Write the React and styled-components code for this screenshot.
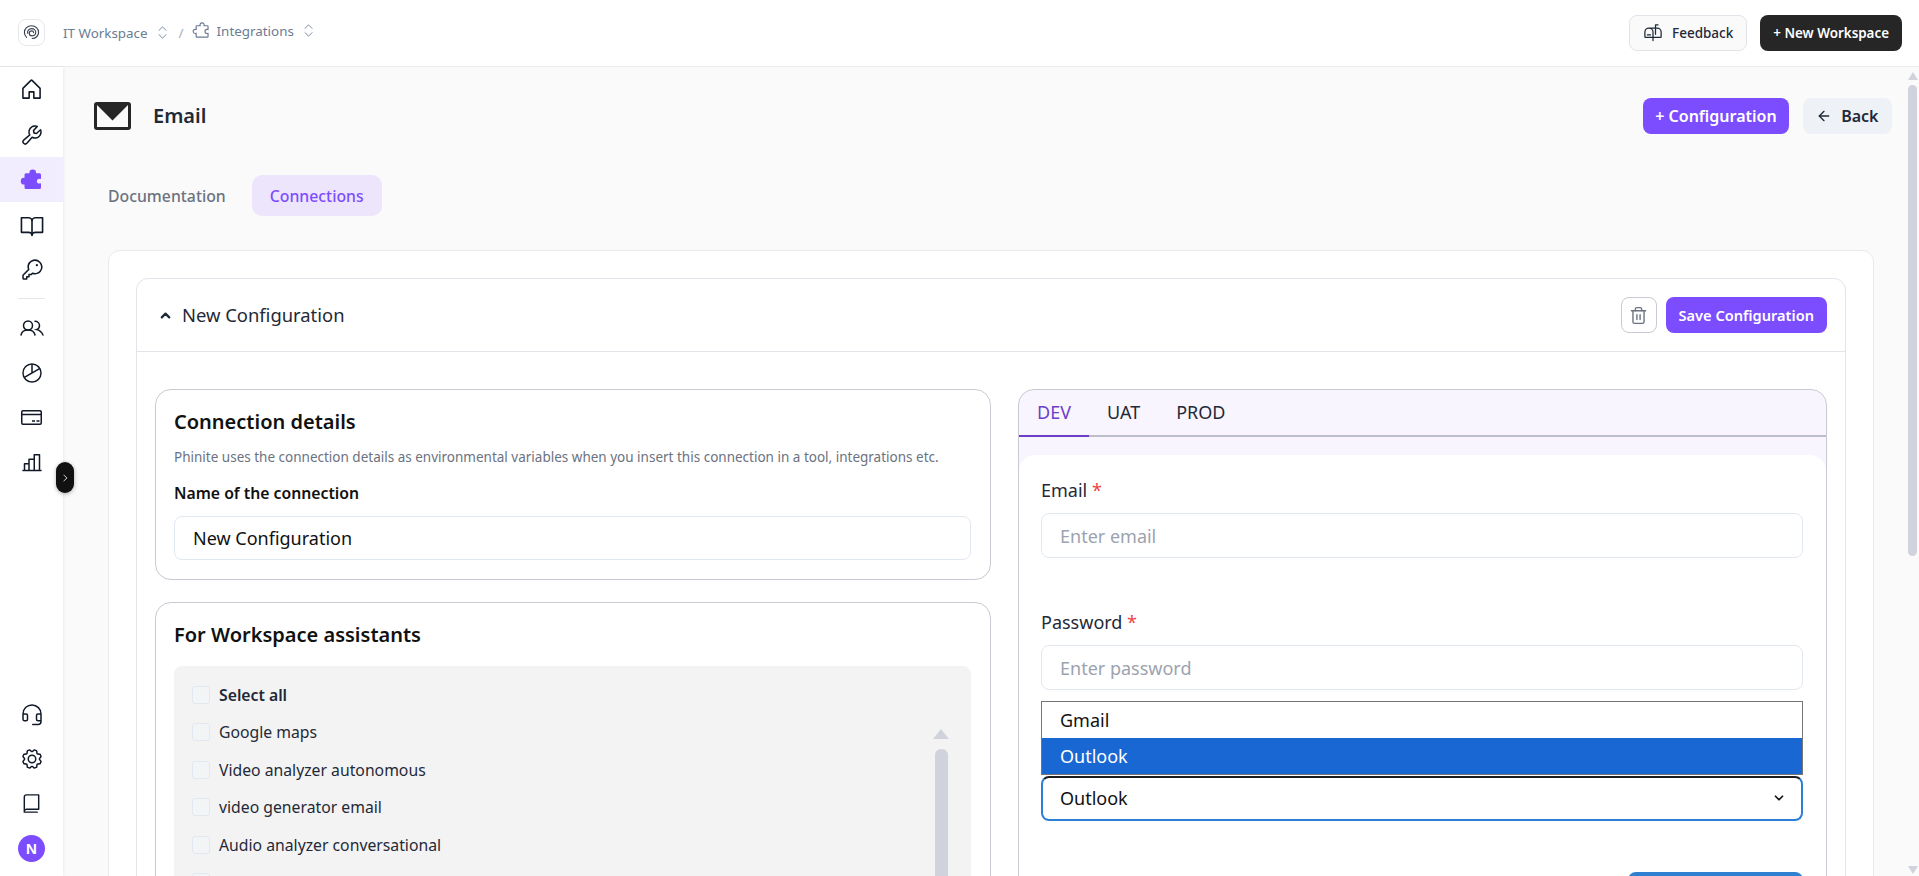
import styled, { createGlobalStyle } from 'styled-components';
import { ArrowLeft, ChevronDown, ChevronUp, ChevronsUpDown, Trash2 } from 'lucide-react';
import {
  PiBook,
  PiBookOpen,
  PiCaretRight,
  PiChartBar,
  PiChartPie,
  PiGear,
  PiHeadset,
  PiHouse,
  PiKey,
  PiMailbox,
  PiPuzzlePiece,
  PiPuzzlePieceFill,
  PiWrench,
} from 'react-icons/pi';

const GlobalStyle = createGlobalStyle`
  * {
    box-sizing: border-box;
  }

  html,
  body {
    margin: 0;
    height: 100%;
    overflow: hidden;
    font-family: 'Noto Sans', sans-serif;
    color: #1f2937;
  }
`;

const Page = styled.div`
  display: flex;
  flex-direction: column;
  height: 100vh;
`;

const TopBar = styled.header`
  display: flex;
  align-items: center;
  justify-content: space-between;
  flex: 0 0 67px;
  padding: 0 17px 1px 18px;
  background: #fff;
  border-bottom: 1px solid #e9eaee;
`;

const Breadcrumbs = styled.nav`
  display: flex;
  align-items: center;
  color: #6b7c93;
  font-size: 13.4px;
`;

const LogoBox = styled.div`
  display: flex;
  align-items: center;
  justify-content: center;
  width: 27px;
  height: 27px;
  margin-right: 18px;
  border: 1px solid #e5e7eb;
  border-radius: 8px;
`;

const Crumb = styled.span`
  display: flex;
  align-items: center;
  gap: 6px;
  position: relative;
  top: ${({ $top }) => $top || 0}px;
`;

const Slash = styled.span`
  margin: 0 8px 0 8px;
  color: #a3adbb;
`;

const TopActions = styled.div`
  display: flex;
  align-items: center;
  gap: 13px;
`;

const FeedbackButton = styled.button`
  display: flex;
  align-items: center;
  gap: 9px;
  height: 36px;
  padding: 0 13px;
  border: 1px solid #e2e4ea;
  border-radius: 8px;
  background: #fafafa;
  color: #1f2937;
  font: 500 13.5px 'Noto Sans', sans-serif;
`;

const DarkButton = styled.button`
  height: 36px;
  padding: 0 13px;
  border: 0;
  border-radius: 8px;
  background: #262626;
  color: #fff;
  font: 600 13.4px 'Noto Sans', sans-serif;
`;

const Body = styled.div`
  position: relative;
  display: flex;
  flex: 1;
  min-height: 0;
`;

const Sidebar = styled.aside`
  display: flex;
  flex-direction: column;
  flex: 0 0 63px;
  padding-bottom: 5px;
  background: #fff;
  box-shadow: 1px 0 3px rgba(0, 0, 0, 0.06);
  z-index: 1;
`;

const SideItem = styled.div`
  display: flex;
  align-items: center;
  justify-content: center;
  height: 45px;
  background: ${({ $active }) => ($active ? '#f1ecfe' : 'transparent')};
  color: ${({ $active }) => ($active ? '#7c4dff' : '#111827')};
`;

const SideDivider = styled.hr`
  width: 27px;
  margin: 6px auto 6px;
  border: 0;
  border-top: 1px solid #e5e7eb;
`;

const SideBottom = styled.div`
  margin-top: auto;
`;

const Avatar = styled.div`
  display: flex;
  align-items: center;
  justify-content: center;
  width: 27px;
  height: 27px;
  border-radius: 50%;
  background: #7c4dff;
  color: #fff;
  font: 700 15px 'Liberation Sans', sans-serif;
`;

const ExpandButton = styled.button`
  position: absolute;
  left: 56px;
  top: 395px;
  display: flex;
  align-items: center;
  justify-content: center;
  width: 18px;
  height: 31px;
  padding: 0;
  border: 0;
  border-radius: 9px;
  background: #111;
  color: #fff;
  box-shadow: 0 1px 4px rgba(0, 0, 0, 0.3);
  z-index: 2;
`;

const Main = styled.main`
  position: relative;
  flex: 1;
  min-width: 0;
  overflow: hidden;
  background: #fafafa;
`;

const MainInner = styled.div`
  padding: 31px 27px 0 31px;
`;

const PageScrollbar = styled.div`
  position: absolute;
  top: 0;
  bottom: 0;
  right: 2px;
  display: flex;
  flex-direction: column;
  align-items: center;
  width: 9px;
  padding: 5px 0 2px;
`;

const ArrowUp = styled.span`
  flex: none;
  width: 0;
  height: 0;
  border-left: ${({ $size }) => $size || 5}px solid transparent;
  border-right: ${({ $size }) => $size || 5}px solid transparent;
  border-bottom: ${({ $tall }) => $tall || 8}px solid #d0d3db;
`;

const ArrowDown = styled.span`
  flex: none;
  width: 0;
  height: 0;
  margin-top: auto;
  border-left: 5px solid transparent;
  border-right: 5px solid transparent;
  border-top: 8px solid #d0d3db;
`;

const PageThumb = styled.span`
  flex: none;
  width: 9px;
  height: 471px;
  margin-top: 5px;
  background: #d0d3db;
  border-radius: 5px;
`;

const TitleRow = styled.div`
  display: flex;
  align-items: center;
  height: 36px;
`;

const Title = styled.h1`
  flex: 1;
  margin: 0 0 2px 22px;
  color: #1f2937;
  font-size: 20px;
  font-weight: 600;
`;

const PrimaryButton = styled.button`
  height: 36px;
  padding: 0 ${({ $pad }) => $pad || 13}px;
  border: 0;
  border-radius: 8px;
  background: #7c4dff;
  color: #fff;
  font: 600 ${({ $size }) => $size || 16}px 'Noto Sans', sans-serif;
`;

const BackButton = styled.button`
  display: flex;
  align-items: center;
  gap: 9px;
  height: 36px;
  margin-left: 14px;
  padding: 0 13.5px;
  border: 0;
  border-radius: 8px;
  background: #eef2f6;
  color: #1f2937;
  font: 600 16px 'Noto Sans', sans-serif;
`;

const PageTabs = styled.div`
  display: flex;
  gap: 26px;
  margin: 41px 0 0 14px;
`;

const PageTab = styled.div`
  display: flex;
  align-items: center;
  height: 41px;
  padding: 0 ${({ $active }) => ($active ? 18 : 0)}px;
  border-radius: 10px;
  background: ${({ $active }) => ($active ? '#ede5fb' : 'transparent')};
  color: ${({ $active }) => ($active ? '#7c4dff' : '#6b7280')};
  font-size: 15.8px;
  font-weight: 500;
`;

const Panel = styled.section`
  margin: 34px 18px 0 14px;
  padding: 27px;
  background: #fff;
  border: 1px solid #e9eaee;
  border-radius: 12px;
`;

const Accordion = styled.div`
  border: 1px solid #e2e4ea;
  border-radius: 12px;
  overflow: hidden;
`;

const AccordionHead = styled.div`
  display: flex;
  align-items: center;
  height: 73px;
  padding: 0 18px 0 21px;
  border-bottom: 1px solid #e2e4ea;
`;

const AccordionTitle = styled.span`
  flex: 1;
  margin: 0 0 2px 9px;
  color: #1f2937;
  font-size: 18.4px;
`;

const TrashButton = styled.button`
  display: flex;
  align-items: center;
  justify-content: center;
  width: 36px;
  height: 36px;
  margin-right: 9px;
  padding: 0;
  border: 1px solid #c8cad2;
  border-radius: 8px;
  background: #fff;
  color: #6b7280;
`;

const Columns = styled.div`
  display: grid;
  grid-template-columns: 836px 809px;
  gap: 27px;
  padding: 37px 18px 32px;
`;

const LeftColumn = styled.div`
  display: flex;
  flex-direction: column;
  gap: 22px;
`;

const Card = styled.div`
  padding: 18px 19px 19px 18px;
  background: #fff;
  border: 1px solid #c8cad2;
  border-radius: 16px;
`;

const CardTitle = styled.h2`
  margin: 0;
  color: #111;
  font-size: 20px;
  line-height: 28px;
  font-weight: 600;
`;

const CardHint = styled.p`
  margin: 12px 0 0;
  color: #6b7280;
  font-size: 13.5px;
  line-height: 18px;
`;

const NameLabel = styled.div`
  margin-top: 16px;
  color: #111;
  font-size: 15.75px;
  line-height: 22px;
  font-weight: 600;
`;

const TextInput = styled.input`
  display: block;
  width: 100%;
  height: ${({ $height }) => $height || 45}px;
  margin-top: ${({ $top }) => $top || 0}px;
  padding: 0 18px;
  background: #fff;
  border: 1px solid #e2e8f0;
  border-radius: 8px;
  color: #111;
  font: 18px 'Noto Sans', sans-serif;
  outline: none;

  &::placeholder {
    color: #9ca3af;
    opacity: 1;
  }
`;

const AssistantBox = styled.div`
  margin-top: 17px;
  padding: 10px 0 10px 18px;
  background: #f3f3f3;
  border-radius: 8px;
`;

const CheckRow = styled.label`
  display: flex;
  align-items: center;
  gap: 9px;
  height: 37.5px;
  color: #1f2937;
  font-size: 15.75px;
  font-weight: ${({ $bold }) => ($bold ? 600 : 400)};
`;

const CheckBox = styled.span`
  flex: 0 0 18px;
  height: 18px;
  background: #f3f4f6;
  border: 1px solid #e2e8f0;
  border-radius: 3px;
`;

const AssistantScroll = styled.div`
  position: relative;
  margin-right: 23px;
`;

const ListScrollbar = styled.div`
  position: absolute;
  top: 15px;
  right: 0;
  display: flex;
  flex-direction: column;
  align-items: center;
  width: 14px;
`;

const ListThumb = styled.span`
  flex: none;
  width: 13px;
  height: 240px;
  margin-top: 10px;
  background: #d0d3db;
  border-radius: 6px;
`;

const EnvCard = styled.div`
  align-self: start;
  background: #f9f5fe;
  border: 1px solid #c8cad2;
  border-radius: 16px;
  overflow: hidden;
`;

const EnvTabs = styled.div`
  display: flex;
  height: 47px;
  border-bottom: 2px solid #bdbec9;
`;

const EnvTab = styled.div`
  display: flex;
  align-items: center;
  height: 47px;
  padding: 0 18px 2px;
  border-bottom: 2px solid ${({ $active }) => ($active ? '#6d3fc8' : 'transparent')};
  color: ${({ $active }) => ($active ? '#6d3fc8' : '#1f2937')};
  font-size: 18px;
`;

const EnvBody = styled.div`
  margin-top: 18px;
  padding: 23px 23px 32px 22px;
  background: #fff;
  border-radius: 16px 16px 0 0;
`;

const FieldLabel = styled.div`
  margin-top: ${({ $top }) => $top || 0}px;
  color: #1f2937;
  font-size: 18px;
  line-height: 24px;
`;

const Required = styled.span`
  color: #ef4444;
`;

const SelectWrap = styled.div`
  position: relative;
  margin-top: 86px;
`;

const SelectBox = styled.div`
  display: flex;
  align-items: center;
  justify-content: space-between;
  height: 45px;
  padding: 0 15px 2px 17px;
  background: #fff;
  border: 2px solid #2b7fd4;
  border-top-color: #1c1c1c;
  border-radius: 8px;
  color: #111;
  font-size: 18px;
`;

const OptionList = styled.div`
  position: absolute;
  left: 0;
  right: 0;
  bottom: 100%;
  margin-bottom: 1px;
  background: #fff;
  border: 1px solid #767676;
`;

const Option = styled.div`
  display: flex;
  align-items: center;
  height: 36px;
  padding: 0 18px 0 18px;
  background: ${({ $selected }) => ($selected ? '#1967d2' : '#fff')};
  color: ${({ $selected }) => ($selected ? '#fff' : '#111')};
  font-size: 18px;
`;

const ConnectRow = styled.div`
  display: flex;
  justify-content: flex-end;
  margin-top: 51px;
`;

const ConnectButton = styled.button`
  width: 175px;
  height: 36px;
  border: 0;
  border-radius: 8px;
  background: #2f80d0;
`;

function LogoMark() {
  return (
    <svg width="17" height="17" viewBox="0 0 24 24" fill="none" stroke="#374151" strokeWidth="1.6" strokeLinecap="round">
      <path d="M5 19c-2-2-3-4.500-3-7.200C2 6.500 6.500 2.500 12 2.500s10 4 10 9.300c0 5-4 8.700-9 8.700" />
      <path d="M6.500 13c-.5-3.500 2-6.500 5.700-6.500 3.200 0 5.800 2.300 5.800 5.200 0 2.900-2.300 5-5 5-2.400 0-4.200-1.600-4.200-3.700 0-1.900 1.500-3.300 3.400-3.300 1.600 0 2.800 1.100 2.800 2.500" />
    </svg>
  );
}

function EmailMark() {
  return (
    <svg width="37" height="28" viewBox="0 0 37 28" fill="none">
      <rect x="1.500" y="1.500" width="34" height="25" rx="1.500" stroke="#262626" strokeWidth="3" />
      <path d="M1 1h35L18.500 18.500z" fill="#262626" />
    </svg>
  );
}

function UsersIcon() {
  return (
    <svg width="24" height="16" viewBox="0 0 24 16" fill="none" stroke="currentColor" strokeWidth="1.500" strokeLinecap="round">
      <circle cx="8" cy="5.500" r="4.500" />
      <path d="M1 15c.6-3 3.300-5 7-5s6.400 2 7 5" />
      <path d="M15 1.200c2.500 0 4.500 1.900 4.500 4.300 0 1.900-1.200 3.500-2.900 4.100 2.900.6 5.100 2.600 6.400 5.400" />
    </svg>
  );
}

function CardIcon() {
  return (
    <svg width="21" height="15" viewBox="0 0 21 15" fill="none" stroke="currentColor" strokeWidth="1.500">
      <rect x=".75" y=".75" width="19.500" height="13.500" rx="1.200" />
      <path d="M1 4.500h19M11 11h3M15.500 11h3" />
    </svg>
  );
}

const assistants = [
  'Google maps',
  'Video analyzer autonomous',
  'video generator email',
  'Audio analyzer conversational',
  'Audio tool',
];

export default function App() {
  return (
    <Page>
      <GlobalStyle />
      <TopBar>
        <Breadcrumbs>
          <LogoBox>
            <LogoMark />
          </LogoBox>
          <Crumb>
            IT Workspace
            <ChevronsUpDown size={17} strokeWidth={1.25} />
          </Crumb>
          <Slash>/</Slash>
          <Crumb $top={-2}>
            <PiPuzzlePiece size={19} />
            Integrations
            <ChevronsUpDown size={17} strokeWidth={1.25} />
          </Crumb>
        </Breadcrumbs>
        <TopActions>
          <FeedbackButton>
            <PiMailbox size={20} />
            Feedback
          </FeedbackButton>
          <DarkButton>+ New Workspace</DarkButton>
        </TopActions>
      </TopBar>
      <Body>
        <Sidebar>
          <SideItem><PiHouse size={25} /></SideItem>
          <SideItem><PiWrench size={24} /></SideItem>
          <SideItem $active><PiPuzzlePieceFill size={24} /></SideItem>
          <SideItem><PiBookOpen size={26} /></SideItem>
          <SideItem><PiKey size={24} /></SideItem>
          <SideDivider />
          <SideItem><UsersIcon /></SideItem>
          <SideItem><PiChartPie size={24} /></SideItem>
          <SideItem><CardIcon /></SideItem>
          <SideItem><PiChartBar size={24} /></SideItem>
          <SideBottom>
            <SideItem><PiHeadset size={24} /></SideItem>
            <SideItem><PiGear size={24} /></SideItem>
            <SideItem><PiBook size={23} /></SideItem>
            <SideItem><Avatar>N</Avatar></SideItem>
          </SideBottom>
        </Sidebar>
        <ExpandButton>
          <PiCaretRight size={10} />
        </ExpandButton>
        <Main>
          <MainInner>
            <TitleRow>
              <EmailMark />
              <Title>Email</Title>
              <PrimaryButton $pad={12}>+ Configuration</PrimaryButton>
              <BackButton>
                <ArrowLeft size={16} />
                Back
              </BackButton>
            </TitleRow>
            <PageTabs>
              <PageTab>Documentation</PageTab>
              <PageTab $active>Connections</PageTab>
            </PageTabs>
            <Panel>
              <Accordion>
                <AccordionHead>
                  <ChevronUp size={15} strokeWidth={3.5} />
                  <AccordionTitle>New Configuration</AccordionTitle>
                  <TrashButton>
                    <Trash2 size={19} strokeWidth={1.75} />
                  </TrashButton>
                  <PrimaryButton $size={14.6} $pad={13}>Save Configuration</PrimaryButton>
                </AccordionHead>
                <Columns>
                  <LeftColumn>
                    <Card>
                      <CardTitle>Connection details</CardTitle>
                      <CardHint>
                        Phinite uses the connection details as environmental variables when you insert this connection in a tool, integrations etc.
                      </CardHint>
                      <NameLabel>Name of the connection</NameLabel>
                      <TextInput $top={12} $height={44} defaultValue="New Configuration" />
                    </Card>
                    <Card>
                      <CardTitle>For Workspace assistants</CardTitle>
                      <AssistantBox>
                        <CheckRow $bold>
                          <CheckBox />
                          Select all
                        </CheckRow>
                        <AssistantScroll>
                          {assistants.map((name) => (
                            <CheckRow key={name}>
                              <CheckBox />
                              {name}
                            </CheckRow>
                          ))}
                          <ListScrollbar>
                            <ArrowUp $size={8} $tall={10} />
                            <ListThumb />
                          </ListScrollbar>
                        </AssistantScroll>
                      </AssistantBox>
                    </Card>
                  </LeftColumn>
                  <EnvCard>
                    <EnvTabs>
                      <EnvTab $active>DEV</EnvTab>
                      <EnvTab>UAT</EnvTab>
                      <EnvTab>PROD</EnvTab>
                    </EnvTabs>
                    <EnvBody>
                      <FieldLabel>Email <Required>*</Required></FieldLabel>
                      <TextInput $top={11} placeholder="Enter email" />
                      <FieldLabel $top={52}>Password <Required>*</Required></FieldLabel>
                      <TextInput $top={11} placeholder="Enter password" />
                      <SelectWrap>
                        <OptionList>
                          <Option>Gmail</Option>
                          <Option $selected>Outlook</Option>
                        </OptionList>
                        <SelectBox>
                          Outlook
                          <ChevronDown size={14} strokeWidth={3} />
                        </SelectBox>
                      </SelectWrap>
                      <ConnectRow>
                        <ConnectButton />
                      </ConnectRow>
                    </EnvBody>
                  </EnvCard>
                </Columns>
              </Accordion>
            </Panel>
          </MainInner>
          <PageScrollbar>
            <ArrowUp />
            <PageThumb />
            <ArrowDown />
          </PageScrollbar>
        </Main>
      </Body>
    </Page>
  );
}
